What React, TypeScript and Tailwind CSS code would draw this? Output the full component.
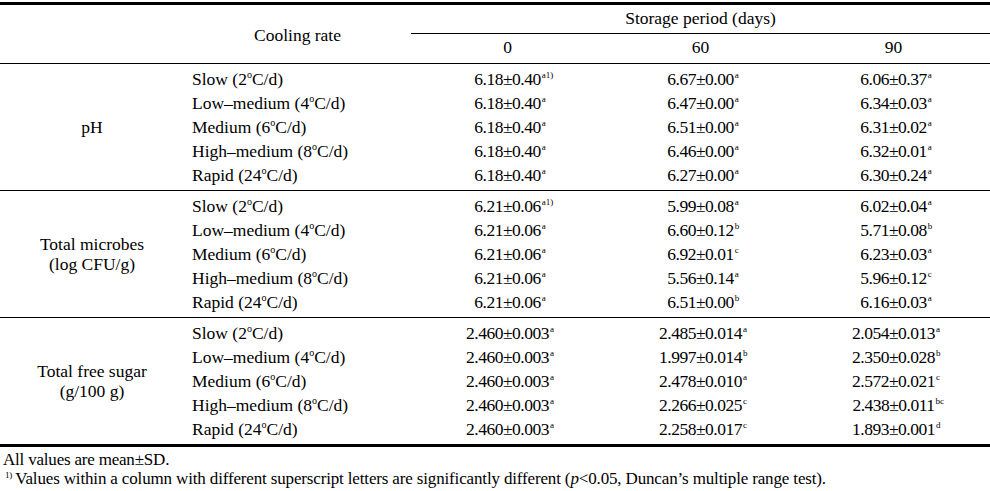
const rates: [string, string][] = [
  ["Slow (2", "C/d)"],
  ["Low–medium (4", "C/d)"],
  ["Medium (6", "C/d)"],
  ["High–medium (8", "C/d)"],
  ["Rapid (24", "C/d)"],
];

type Cell = [string, string];

const sections: { label: string[]; rows: Cell[][] }[] = [
  {
    label: ["pH"],
    rows: [
      [["6.18±0.40", "a1)"], ["6.67±0.00", "a"], ["6.06±0.37", "a"]],
      [["6.18±0.40", "a"], ["6.47±0.00", "a"], ["6.34±0.03", "a"]],
      [["6.18±0.40", "a"], ["6.51±0.00", "a"], ["6.31±0.02", "a"]],
      [["6.18±0.40", "a"], ["6.46±0.00", "a"], ["6.32±0.01", "a"]],
      [["6.18±0.40", "a"], ["6.27±0.00", "a"], ["6.30±0.24", "a"]],
    ],
  },
  {
    label: ["Total microbes", "(log CFU/g)"],
    rows: [
      [["6.21±0.06", "a1)"], ["5.99±0.08", "a"], ["6.02±0.04", "a"]],
      [["6.21±0.06", "a"], ["6.60±0.12", "b"], ["5.71±0.08", "b"]],
      [["6.21±0.06", "a"], ["6.92±0.01", "c"], ["6.23±0.03", "a"]],
      [["6.21±0.06", "a"], ["5.56±0.14", "a"], ["5.96±0.12", "c"]],
      [["6.21±0.06", "a"], ["6.51±0.00", "b"], ["6.16±0.03", "a"]],
    ],
  },
  {
    label: ["Total free sugar", "(g/100 g)"],
    rows: [
      [["2.460±0.003", "a"], ["2.485±0.014", "a"], ["2.054±0.013", "a"]],
      [["2.460±0.003", "a"], ["1.997±0.014", "b"], ["2.350±0.028", "b"]],
      [["2.460±0.003", "a"], ["2.478±0.010", "a"], ["2.572±0.021", "c"]],
      [["2.460±0.003", "a"], ["2.266±0.025", "c"], ["2.438±0.011", "bc"]],
      [["2.460±0.003", "a"], ["2.258±0.017", "c"], ["1.893±0.001", "d"]],
    ],
  },
];

const Value = ({ cell }: { cell: Cell }) => (
  <div className="flex h-6 items-center justify-center tracking-[-0.5px]">
    <span className="relative">
      {cell[0]}
      <span className="absolute left-full top-[1px] pl-[1px] text-[9px] leading-none tracking-normal">
        {cell[1]}
      </span>
    </span>
  </div>
);

export default function App() {
  return (
    <div
      className="w-[990px] bg-white text-[17.5px] leading-[19px] text-black"
      style={{ fontFamily: '"Liberation Serif", "Times New Roman", serif' }}
    >
      <div className="mt-[2px] grid grid-cols-[184px_227px_193px_193px_193px] border-y-[3px] border-black">
        {/* header */}
        <div className="row-span-2 border-b border-black" />
        <div className="row-span-2 flex items-center justify-center border-b border-black pt-[2px]">
          Cooling rate
        </div>
        <div className="col-span-3 flex h-[29px] items-center justify-center border-b border-black pb-[2px]">
          Storage period (days)
        </div>
        {["0", "60", "90"].map((d) => (
          <div key={d} className="flex h-[30px] items-center justify-center border-b border-black pb-[2px]">
            {d}
          </div>
        ))}

        {/* body */}
        {sections.map((s, si) => (
          <div
            key={s.label[0]}
            className={`col-span-5 grid grid-cols-[184px_227px_193px_193px_193px] py-[3px] ${
              si < sections.length - 1 ? "border-b border-black" : ""
            }`}
          >
            <div className="flex flex-col items-center justify-center leading-[20px]">
              {s.label.map((l) => (
                <span key={l}>{l}</span>
              ))}
            </div>
            <div className="flex flex-col pl-2">
              {rates.map((r) => (
                <div key={r[0]} className="flex h-6 items-center">
                  {r[0]}
                  <span className="relative top-[-5px] text-[10px]">o</span>
                  {r[1]}
                </div>
              ))}
            </div>
            {[0, 1, 2].map((c) => (
              <div key={c} className="flex flex-col">
                {s.rows.map((row, ri) => (
                  <Value key={ri} cell={row[c]} />
                ))}
              </div>
            ))}
          </div>
        ))}
      </div>

      <div className="pl-[3px] pt-[3px] text-[17px] tracking-[-0.2px]">All values are mean±SD.</div>
      <div className="pl-[5px] text-[17px] tracking-[-0.15px]">
        <span className="relative top-[-6px] text-[9px]">1)</span>
        <span className="pl-[3px]">
          Values within a column with different superscript letters are significantly different (<i>p</i>&lt;0.05,
          Duncan’s multiple range test).
        </span>
      </div>
    </div>
  );
}
